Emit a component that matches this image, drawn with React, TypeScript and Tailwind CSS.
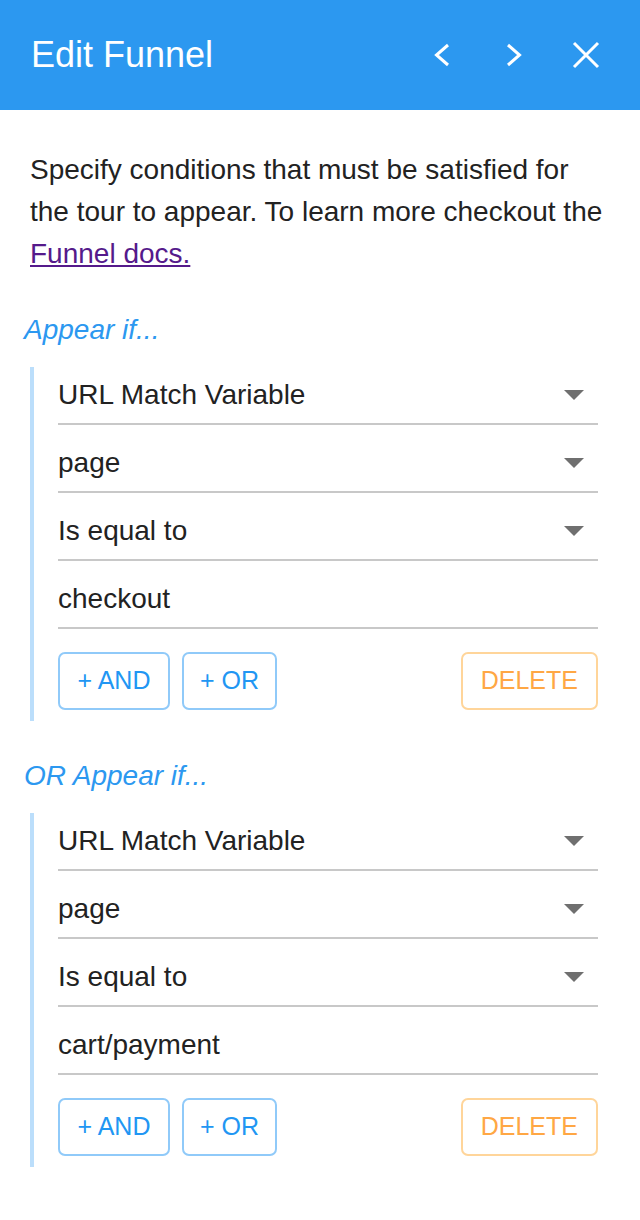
import React from 'react';

interface Condition {
  variable: string;
  param: string;
  operator: string;
  value: string;
}

const conditions: Condition[] = [
  { variable: 'URL Match Variable', param: 'page', operator: 'Is equal to', value: 'checkout' },
  { variable: 'URL Match Variable', param: 'page', operator: 'Is equal to', value: 'cart/payment' },
];

const Caret = () => (
  <svg width="20" height="10" viewBox="0 0 20 10" className="mr-[14px] shrink-0">
    <polygon points="0,0 20,0 10,10" fill="#6f6f6f" />
  </svg>
);

const Row = ({ text, select, last }: { text: string; select?: boolean; last?: boolean }) => (
  <div
    className={`h-[58px] flex items-center justify-between border-b-2 border-[#c8c8c8] ${last ? '' : 'mb-[10px]'}`}
  >
    <span className="text-[28px] text-[#222]">{text}</span>
    {select && <Caret />}
  </div>
);

const ConditionBlock = ({ c }: { c: Condition }) => (
  <div className="mt-[16px] border-l-4 border-[#bbdefb] pl-[24px] mr-[12px] pb-[11px]">
    <Row text={c.variable} select />
    <Row text={c.param} select />
    <Row text={c.operator} select />
    <Row text={c.value} last />
    <div className="mt-[23px] flex items-center">
      <button className="h-[58px] px-[17.5px] border-2 border-[#90caf9] rounded-[7px] text-[25px] text-[#2196f3] bg-white">
        + AND
      </button>
      <button className="h-[58px] ml-[12px] px-[16px] border-2 border-[#90caf9] rounded-[7px] text-[25px] text-[#2196f3] bg-white">
        + OR
      </button>
      <button className="h-[58px] ml-auto px-[18px] border-2 border-[#ffd59a] rounded-[7px] text-[25px] text-[#ffa744] bg-white">
        DELETE
      </button>
    </div>
  </div>
);

export default function App() {
  return (
    <div className="w-[640px] min-h-[1220px] bg-white font-['Liberation_Sans',Arial,sans-serif]">
      {/* Header */}
      <header className="h-[110px] bg-[#2c98f0] flex items-center pl-[31px] pr-[40px]">
        <h1 className="flex-1 text-[36px] text-white">Edit Funnel</h1>
        <div className="flex items-center gap-[44px]">
          <svg width="28" height="28" viewBox="0 0 28 28" fill="none" stroke="white" strokeWidth="3">
            <path d="M20 4 L8.5 14 L20 24" />
          </svg>
          <svg width="28" height="28" viewBox="0 0 28 28" fill="none" stroke="white" strokeWidth="3">
            <path d="M8 4 L19.5 14 L8 24" />
          </svg>
          <svg width="28" height="28" viewBox="0 0 28 28" fill="none" stroke="white" strokeWidth="3">
            <path d="M2 2 L26 26 M26 2 L2 26" />
          </svg>
        </div>
      </header>

      {/* Body */}
      <div className="px-[30px] pt-[39px]">
        <p className="text-[28px] leading-[42px] text-[#222]">
          Specify conditions that must be satisfied for the tour to appear. To learn more checkout the{' '}
          <a href="#" className="text-[#551a8b] underline">
            Funnel docs.
          </a>
        </p>

        {conditions.map((c, i) => (
          <div key={i}>
            <div className="mt-[34px] -ml-[6px] text-[28px] leading-[42px] italic text-[#2c98f0]">
              {i === 0 ? 'Appear if...' : 'OR Appear if...'}
            </div>
            <ConditionBlock c={c} />
          </div>
        ))}
      </div>
    </div>
  );
}
